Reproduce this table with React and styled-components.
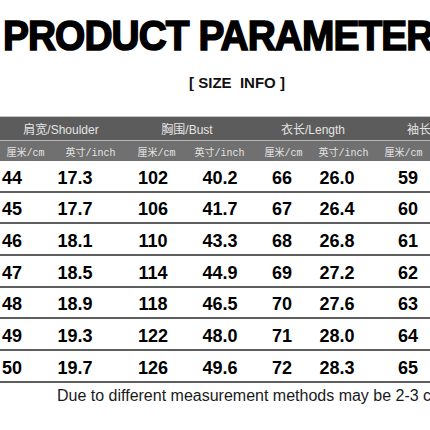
import React from 'react';
import styled, { createGlobalStyle } from 'styled-components';

const GlobalStyle = createGlobalStyle`
  html, body {
    margin: 0;
    padding: 0;
    background: #fff;
  }
`;

const groups = ['肩宽/Shoulder', '胸围/Bust', '衣长/Length', '袖长/Sleeve'];

// header units, shifted a touch to sit where the original does
const units = [
  { label: '厘米/cm', dx: -4 },
  { label: '英寸/inch', dx: -2 },
  { label: '厘米/cm', dx: 1 },
  { label: '英寸/inch', dx: 1 },
  { label: '厘米/cm', dx: 2 },
  { label: '英寸/inch', dx: -1 },
  { label: '厘米/cm', dx: -4 },
  { label: '英寸/inch', dx: 0 },
];

const dataShift = [-17.5, -17.5, -2.5, 1.5, 0.5, -7.5, 0.5, 0];

const rows = [
  ['44', '17.3', '102', '40.2', '66', '26.0', '59', '23.2'],
  ['45', '17.7', '106', '41.7', '67', '26.4', '60', '23.6'],
  ['46', '18.1', '110', '43.3', '68', '26.8', '61', '24.0'],
  ['47', '18.5', '114', '44.9', '69', '27.2', '62', '24.4'],
  ['48', '18.9', '118', '46.5', '70', '27.6', '63', '24.8'],
  ['49', '19.3', '122', '48.0', '71', '28.0', '64', '25.2'],
  ['50', '19.7', '126', '49.6', '72', '28.3', '65', '25.6'],
];

export default function App() {
  return (
    <Page>
      <GlobalStyle />
      <Title>PRODUCT PARAMETER</Title>
      <Subtitle>[ SIZE&nbsp;&nbsp;INFO ]</Subtitle>
      <Table>
        <GroupRow>
          {groups.map((g) => (
            <GroupCell key={g}>{g}</GroupCell>
          ))}
        </GroupRow>
        <UnitRow>
          {units.map((u, i) => (
            <UnitCell key={i} $dx={u.dx}>{u.label}</UnitCell>
          ))}
        </UnitRow>
        {rows.map((r) => (
          <DataRow key={r[0]}>
            {r.map((v, i) => (
              <DataCell key={i} $dx={dataShift[i]}>{v}</DataCell>
            ))}
          </DataRow>
        ))}
      </Table>
      <Note>Due to different measurement methods may be 2-3 cm error</Note>
    </Page>
  );
}

const Page = styled.div`
  width: 430px;
  height: 430px;
  overflow: hidden;
  background: #fff;
  display: flex;
  flex-direction: column;
`;

const Title = styled.h1`
  margin: 15px 0 0 3px;
  font-family: "Liberation Sans", Arial, sans-serif;
  font-weight: 700;
  font-size: 42px;
  line-height: 42px;
  height: 42px;
  letter-spacing: -1px;
  white-space: nowrap;
  color: #000;
  -webkit-text-stroke: 1.6px #000;
  transform: scaleX(0.925);
  transform-origin: left center;
`;

const Subtitle = styled.div`
  margin-top: 18px;
  padding-left: 44px;
  text-align: center;
  font-family: "Liberation Sans", Arial, sans-serif;
  font-weight: 700;
  font-size: 15px;
  line-height: 15px;
  color: #111;
  white-space: nowrap;
`;

const Table = styled.div`
  margin: 26px 0 0 -2px;
  width: 504px;
  border-top: 1px solid #c4c4c4;
`;

const GroupRow = styled.div`
  display: grid;
  grid-template-columns: repeat(4, 126px);
  height: 23px;
  background: #5c5c5c;
  border-bottom: 1px solid #b8b8b8;
`;

const GroupCell = styled.div`
  display: flex;
  align-items: center;
  justify-content: center;
  font-family: "Liberation Sans", "Noto Sans CJK SC", sans-serif;
  font-size: 12px;
  color: #e4e4e4;
  white-space: nowrap;
`;

const UnitRow = styled.div`
  display: grid;
  grid-template-columns: repeat(8, 63px);
  height: 20px;
  background: #707070;
`;

const UnitCell = styled.div`
  display: flex;
  align-items: center;
  justify-content: center;
  font-family: "Liberation Mono", "Noto Sans CJK SC", monospace;
  font-size: 10px;
  color: #e2e2e2;
  white-space: nowrap;
  transform: translateX(${(p) => p.$dx}px);
`;

const DataRow = styled.div`
  display: grid;
  grid-template-columns: repeat(8, 63px);
  box-sizing: border-box;
  height: 31.67px;
  border-bottom: 2px solid #5e5e5e;
`;

const DataCell = styled.div`
  display: flex;
  align-items: center;
  justify-content: center;
  padding-top: 5px;
  font-family: "Liberation Sans", Arial, sans-serif;
  font-weight: 700;
  font-size: 18px;
  color: #000;
  white-space: nowrap;
  transform: translateX(${(p) => p.$dx}px);
`;

const Note = styled.div`
  margin-top: 5.5px;
  padding-left: 57px;
  font-family: "Liberation Sans", Arial, sans-serif;
  font-size: 16px;
  line-height: 16px;
  color: #1a1a1a;
  white-space: nowrap;
`;
